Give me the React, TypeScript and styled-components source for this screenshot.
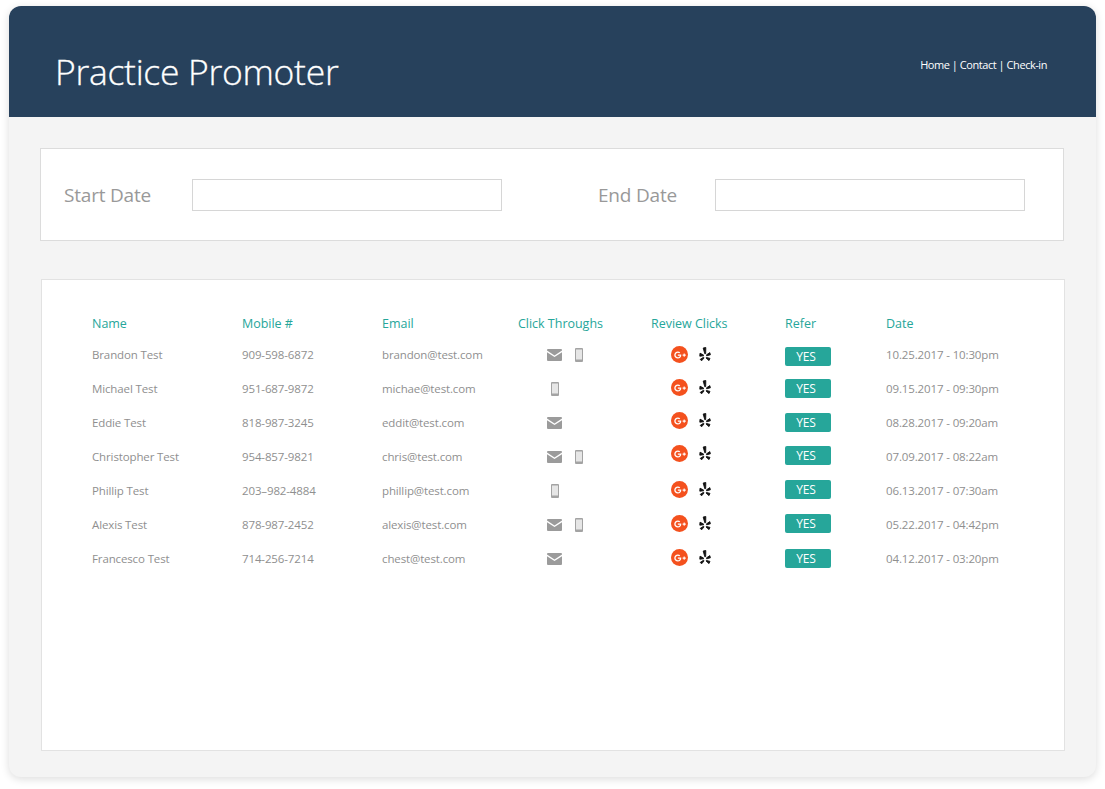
import { FaGooglePlusG } from 'react-icons/fa'
import styled, { createGlobalStyle } from 'styled-components'

const GlobalStyle = createGlobalStyle`
  html,
  body {
    margin: 0;
    padding: 0;
    background-color: #fff;
    font-family: 'Open Sans', 'Noto Sans', sans-serif;
  }
`

const teal = '#26a69a'
const grey = '#8f8f8f'

const Page = styled.div`
  width: 1105px;
  height: 789px;
  padding: 6px 9px 12px;
  box-sizing: border-box;
`

const Shell = styled.div`
  display: flex;
  flex-direction: column;
  height: 771px;
  overflow: hidden;
  background-color: #f4f4f4;
  border-radius: 12px;
  box-shadow: 0 2px 8px rgba(0, 0, 0, 0.14);
`

const Header = styled.header`
  display: flex;
  align-items: flex-start;
  justify-content: space-between;
  height: 111px;
  padding: 40px 49px 0 46px;
  box-sizing: border-box;
  flex-shrink: 0;
  color: #fff;
  background-color: #27415c;
`

const Title = styled.h1`
  margin: 0;
  font-size: 35.5px;
  font-weight: 300;
  line-height: 50px;
  letter-spacing: -0.3px;
  -webkit-text-stroke: 0.3px #fff;
`

const Nav = styled.nav`
  margin-top: 11px;
  font-size: 11px;
  line-height: 15px;
  letter-spacing: -0.45px;
`

const Content = styled.main`
  display: flex;
  flex-direction: column;
  gap: 38px;
  padding: 31px 31px 0;
`

const FilterCard = styled.section`
  display: flex;
  align-items: center;
  width: 1024px;
  height: 93px;
  padding-left: 23px;
  box-sizing: border-box;
  background-color: #fff;
  border: 1px solid #dcdcdc;
`

const FilterLabel = styled.label<{ $width: number }>`
  width: ${(p) => p.$width}px;
  font-size: 19px;
  color: #999;
  letter-spacing: -0.2px;
`

const DateInput = styled.input<{ $gap?: number }>`
  width: 310px;
  height: 32px;
  padding: 0;
  margin-right: ${(p) => p.$gap ?? 0}px;
  box-sizing: border-box;
  background-color: #fff;
  border: 1px solid #d6d6d6;
`

const TableCard = styled.section`
  width: 1024px;
  height: 472px;
  margin-left: 1px;
  padding: 33px 0 0 50px;
  box-sizing: border-box;
  background-color: #fff;
  border: 1px solid #e2e2e2;
`

const Row = styled.div`
  display: grid;
  grid-template-columns: 150px 140px 136px 133px 134px 101px 1fr;
  align-items: center;
  height: 34px;
  font-size: 11.5px;
  color: ${grey};
  letter-spacing: -0.13px;
`

const HeadRow = styled(Row)`
  height: 20px;
  margin-bottom: 4px;
  font-size: 12.5px;
  letter-spacing: -0.02px;
  color: ${teal};
`

const IconCell = styled.div<{ $indent: number; $gap: number; $shift?: number }>`
  display: flex;
  align-items: center;
  gap: ${(p) => p.$gap}px;
  padding-left: ${(p) => p.$indent}px;
  margin-top: ${(p) => p.$shift ?? 0}px;
`

const GoogleBadge = styled.span`
  display: flex;
  align-items: center;
  justify-content: center;
  width: 17px;
  height: 17px;
  font-size: 12px;
  color: #fff;
  background-color: #f4511e;
  border-radius: 50%;
`

const YesBadge = styled.span<{ $shift: number }>`
  display: block;
  width: 46px;
  height: 19px;
  padding-right: 4px;
  margin-top: ${(p) => p.$shift}px;
  box-sizing: border-box;
  font-size: 12px;
  line-height: 19px;
  text-align: center;
  color: #fff;
  background-color: ${teal};
  border-radius: 2px;
`

const MailIcon = () => (
  <svg width="15" height="12" viewBox="0 0 15 12">
    <path d="M0 1 Q0 0 1 0 H14 Q15 0 15 1 V1.6 L7.5 6.4 L0 1.6 Z" fill="#9b9b9b" />
    <path d="M0 3.2 L7.5 8 L15 3.2 V11 Q15 12 14 12 H1 Q0 12 0 11 Z" fill="#9b9b9b" />
  </svg>
)

const PhoneIcon = () => (
  <svg width="8" height="14" viewBox="0 0 8 14">
    <rect x="0" y="0" width="8" height="14" rx="1" fill="#a3a3a3" />
    <rect x="1" y="1.5" width="6" height="10" fill="#e6e6e6" />
  </svg>
)

const YelpIcon = () => (
  <svg width="12" height="15" viewBox="0 0 12 15">
    <g fill="#111" stroke="#111" strokeWidth="0.9" strokeLinejoin="round">
      <path d="M4.2 1 L6.8 0.5 L6.7 6.6 L5.8 6.8 Z" />
      <path d="M1 6.2 L4.6 8 L4.4 8.8 L0.8 9.2 Z" />
      <path d="M10.8 5.6 L11.4 7.8 L7.8 8.8 L7.3 8 Z" />
      <path d="M4.6 10.2 L5 11 L2.6 13.8 L1.2 12.4 Z" />
      <path d="M7.4 10.4 L11 11.4 L10 13.6 L7 11 Z" />
    </g>
  </svg>
)

type Visit = {
  name: string
  mobile: string
  email: string
  mail: boolean
  phone: boolean
  date: string
  iconShift: number
  yesShift: number
}

const visits: Visit[] = [
  { name: 'Brandon Test', mobile: '909-598-6872', email: 'brandon@test.com', mail: true, phone: true, date: '10.25.2017 - 10:30pm', iconShift: 1, yesShift: 4 },
  { name: 'Michael Test', mobile: '951-687-9872', email: 'michae@test.com', mail: false, phone: true, date: '09.15.2017 - 09:30pm', iconShift: -1, yesShift: 0 },
  { name: 'Eddie Test', mobile: '818-987-3245', email: 'eddit@test.com', mail: true, phone: false, date: '08.28.2017 - 09:20am', iconShift: -3, yesShift: 0 },
  { name: 'Christopher Test', mobile: '954-857-9821', email: 'chris@test.com', mail: true, phone: true, date: '07.09.2017 - 08:22am', iconShift: -5, yesShift: -2 },
  { name: 'Phillip Test', mobile: '203–982-4884', email: 'phillip@test.com', mail: false, phone: true, date: '06.13.2017 - 07:30am', iconShift: -1, yesShift: -2 },
  { name: 'Alexis Test', mobile: '878-987-2452', email: 'alexis@test.com', mail: true, phone: true, date: '05.22.2017 - 04:42pm', iconShift: -1, yesShift: -2 },
  { name: 'Francesco Test', mobile: '714-256-7214', email: 'chest@test.com', mail: true, phone: false, date: '04.12.2017 - 03:20pm', iconShift: -1, yesShift: 0 },
]

export default function App() {
  return (
    <Page>
      <GlobalStyle />
      <Shell>
        <Header>
          <Title>Practice Promoter</Title>
          <Nav>Home | Contact | Check-in</Nav>
        </Header>
        <Content>
          <FilterCard>
            <FilterLabel $width={128}>Start Date</FilterLabel>
            <DateInput $gap={96} />
            <FilterLabel $width={117}>End Date</FilterLabel>
            <DateInput />
          </FilterCard>
          <TableCard>
            <HeadRow>
              <div>Name</div>
              <div>Mobile #</div>
              <div>Email</div>
              <div>Click Throughs</div>
              <div>Review Clicks</div>
              <div>Refer</div>
              <div>Date</div>
            </HeadRow>
            {visits.map((visit) => (
              <Row key={visit.name}>
                <div>{visit.name}</div>
                <div>{visit.mobile}</div>
                <div>{visit.email}</div>
                <IconCell $indent={visit.mail ? 29 : 33} $gap={13} $shift={2}>
                  {visit.mail && <MailIcon />}
                  {visit.phone && <PhoneIcon />}
                </IconCell>
                <IconCell $indent={20} $gap={11} $shift={visit.iconShift}>
                  <GoogleBadge>
                    <FaGooglePlusG />
                  </GoogleBadge>
                  <YelpIcon />
                </IconCell>
                <YesBadge $shift={visit.yesShift}>YES</YesBadge>
                <div>{visit.date}</div>
              </Row>
            ))}
          </TableCard>
        </Content>
      </Shell>
    </Page>
  )
}
